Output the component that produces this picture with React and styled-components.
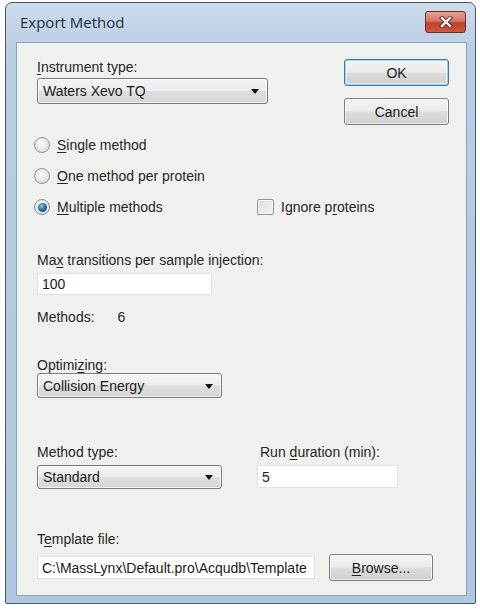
import styled, { createGlobalStyle } from 'styled-components';

const GlobalStyle = createGlobalStyle`
  html, body {
    margin: 0;
    padding: 0;
    background: #ffffff;
  }
  body {
    font-family: "Liberation Sans", Arial, sans-serif;
    font-size: 14px;
    color: #262626;
  }
`;

const Window = styled.div`
  box-sizing: border-box;
  margin: 2px 0 0 5px;
  width: 471px;
  height: 602px;
  border: 1px solid #4a5866;
  border-radius: 7px 7px 2px 2px;
  background: linear-gradient(180deg, #cddcec 0%, #b9cde3 8%, #aec6df 100%);
  padding: 0 8px 7px 10px;
  display: flex;
  flex-direction: column;
`;

const TitleBar = styled.div`
  height: 37px;
  display: flex;
  align-items: center;
  justify-content: space-between;
  padding: 0 1px 2px 4px;
`;

const Title = styled.span`
  font-family: "Open Sans", "Noto Sans", sans-serif;
  font-size: 15px;
  color: #1c2d3e;
`;

const CloseButton = styled.div`
  width: 41px;
  height: 22px;
  box-sizing: border-box;
  border: 1px solid #6e2a22;
  border-radius: 3px;
  background: linear-gradient(180deg, #e3a293 0%, #d47765 45%, #c2402a 55%, #c95a3f 100%);
  display: flex;
  align-items: center;
  justify-content: center;
  margin-top: 1px;
`;

const Client = styled.div`
  flex: 1;
  box-sizing: border-box;
  border: 1px solid #8aa3bf;
  background: #f0f0ef;
  padding: 16px 17px 0 20px;
  display: flex;
  flex-direction: column;
`;

const TopRow = styled.div`
  display: flex;
  justify-content: space-between;
`;

const Field = styled.div`
  display: flex;
  flex-direction: column;
  gap: ${p => p.gap ?? 4}px;
  margin-top: ${p => p.top ?? 0}px;
  width: ${p => (p.width ? `${p.width}px` : 'auto')};
`;

const Label = styled.div`
  line-height: 16px;
  height: 16px;
  white-space: nowrap;
  padding-left: ${p => p.indent ?? 0}px;
`;

const Key = styled.span`
  text-decoration: underline;
  text-underline-offset: 2px;
`;

const Select = styled.div`
  box-sizing: border-box;
  width: ${p => p.width}px;
  height: ${p => p.height ?? 25}px;
  border: 1px solid #7a7a7a;
  border-radius: 3px;
  background: linear-gradient(180deg, #f4f4f4 0%, #ececec 48%, #dedede 52%, #d6d6d6 100%);
  box-shadow: inset 0 0 0 1px rgba(255, 255, 255, 0.7);
  display: flex;
  align-items: center;
  justify-content: space-between;
  padding: 0 8px 0 5px;
  color: #1b1b1b;
`;

const Arrow = styled.span`
  width: 0;
  height: 0;
  border-left: 4px solid transparent;
  border-right: 4px solid transparent;
  border-top: 5px solid #111;
  margin-top: 1px;
`;

const TextBox = styled.div`
  box-sizing: border-box;
  width: ${p => p.width}px;
  height: ${p => p.height ?? 23}px;
  background: #ffffff;
  border: 1px solid #e2e2e2;
  display: flex;
  align-items: center;
  padding-left: 4px;
  overflow: hidden;
  white-space: nowrap;
  color: #1b1b1b;
`;

const ButtonColumn = styled.div`
  display: flex;
  flex-direction: column;
  gap: 12px;
`;

const Button = styled.div`
  box-sizing: border-box;
  width: ${p => p.width ?? 105}px;
  height: 27px;
  border: 1px solid ${p => (p.primary ? '#3d7bad' : '#7d7d7d')};
  border-radius: 3px;
  background: linear-gradient(180deg, #f3f3f3 0%, #ebebeb 48%, #dddddd 52%, #cfcfcf 100%);
  box-shadow: ${p => (p.primary ? 'inset 0 0 0 1px #9fd0ef, inset 0 0 0 2px rgba(255,255,255,0.5)' : 'inset 0 0 0 1px rgba(255,255,255,0.7)')};
  display: flex;
  align-items: center;
  justify-content: center;
  color: #1b1b1b;
`;

const RadioList = styled.div`
  display: flex;
  flex-direction: column;
  gap: 11px;
  margin-top: 10px;
`;

const OptionRow = styled.div`
  display: flex;
  align-items: center;
  height: 20px;
`;

const Option = styled.div`
  display: flex;
  align-items: center;
  gap: 7px;
  width: ${p => (p.width ? `${p.width}px` : 'auto')};
  margin-left: ${p => p.shift ?? -3}px;
`;

const Radio = styled.span`
  box-sizing: border-box;
  width: 16px;
  height: 16px;
  border-radius: 50%;
  border: 1px solid #8f9396;
  background: radial-gradient(circle at 45% 40%, #fdfdfd 0%, #e6e6e6 55%, #cfd2d4 100%);
  display: flex;
  align-items: center;
  justify-content: center;

  &::after {
    content: '';
    display: ${p => (p.checked ? 'block' : 'none')};
    width: 9px;
    height: 9px;
    border-radius: 50%;
    background: radial-gradient(circle at 40% 35%, #9cd3f2 0%, #2c79ad 40%, #0b3b63 100%);
  }
`;

const CheckBox = styled.span`
  box-sizing: border-box;
  width: 17px;
  height: 16px;
  border: 1px solid #8f9396;
  border-radius: 2px;
  background: linear-gradient(135deg, #d9d9d9 0%, #ececec 60%, #f6f6f6 100%);
  box-shadow: inset 0 0 0 1px #f4f4f4;
`;

const MethodsRow = styled.div`
  display: flex;
  line-height: 16px;
  margin-top: 14px;
  gap: 23px;
`;

const PairRow = styled.div`
  display: flex;
  gap: 35px;
  margin-top: ${p => p.top ?? 0}px;
`;

const BrowseRow = styled.div`
  display: flex;
  align-items: center;
  gap: 14px;
`;

function CloseGlyph() {
  return (
    <svg width="14" height="12" viewBox="0 0 14 12">
      <path d="M3 2 L11 10 M11 2 L3 10" stroke="#5a1d14" strokeWidth="4" strokeLinecap="square" />
      <path d="M3 2 L11 10 M11 2 L3 10" stroke="#ffffff" strokeWidth="2.4" strokeLinecap="square" />
    </svg>
  );
}

export default function App() {
  return (
    <>
      <GlobalStyle />
      <Window>
        <TitleBar>
          <Title>Export Method</Title>
          <CloseButton>
            <CloseGlyph />
          </CloseButton>
        </TitleBar>
        <Client>
          <TopRow>
            <Field gap={3}>
              <Label><Key>I</Key>nstrument type:</Label>
              <Select width={231} height={26}>
                Waters Xevo TQ
                <Arrow />
              </Select>
            </Field>
            <ButtonColumn>
              <Button primary>OK</Button>
              <Button>Cancel</Button>
            </ButtonColumn>
          </TopRow>

          <RadioList>
            <OptionRow>
              <Option>
                <Radio />
                <span><Key>S</Key>ingle method</span>
              </Option>
            </OptionRow>
            <OptionRow>
              <Option>
                <Radio />
                <span><Key>O</Key>ne method per protein</span>
              </Option>
            </OptionRow>
            <OptionRow>
              <Option width={223}>
                <Radio checked />
                <span><Key>M</Key>ultiple methods</span>
              </Option>
              <Option shift={0}>
                <CheckBox />
                <span>Ignore p<Key>r</Key>oteins</span>
              </Option>
            </OptionRow>
          </RadioList>

          <Field top={35} gap={5}>
            <Label>Ma<Key>x</Key> transitions per sample injection:</Label>
            <TextBox width={175} height={22}>100</TextBox>
          </Field>

          <MethodsRow>
            <span>Methods:</span>
            <span>6</span>
          </MethodsRow>

          <Field top={32} gap={0}>
            <Label>Optimi<Key>z</Key>ing:</Label>
            <Select width={185}>
              Collision Energy
              <Arrow />
            </Select>
          </Field>

          <PairRow top={46}>
            <Field gap={5} width={185}>
              <Label>Method type:</Label>
              <Select width={185} height={24}>
                Standard
                <Arrow />
              </Select>
            </Field>
            <Field gap={5}>
              <Label indent={3}>Run <Key>d</Key>uration (min):</Label>
              <TextBox width={141}>5</TextBox>
            </Field>
          </PairRow>

          <Field top={42} gap={7}>
            <Label>T<Key>e</Key>mplate file:</Label>
            <BrowseRow>
              <TextBox width={278}>C:\MassLynx\Default.pro\Acqudb\Template</TextBox>
              <Button width={104}><span><Key>B</Key>rowse...</span></Button>
            </BrowseRow>
          </Field>
        </Client>
      </Window>
    </>
  );
}
